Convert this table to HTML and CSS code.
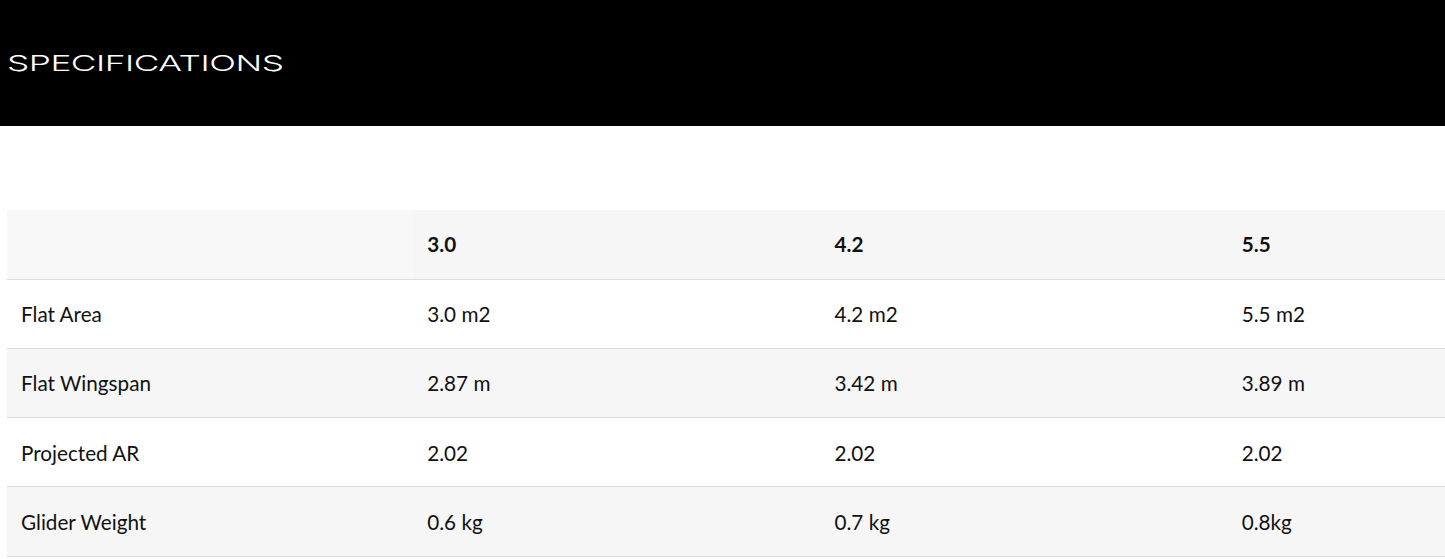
FILE: index.html
```html
<!DOCTYPE html>
<html>
<head>
<meta charset="utf-8">
<link rel="stylesheet" href="styles.css">
</head>
<body>
<header class="banner">
  <h2 class="banner-title">SPECIFICATIONS</h2>
</header>
<section class="specs">
  <table class="spec-table">
    <thead>
      <tr>
        <th class="corner"></th>
        <th>3.0</th>
        <th>4.2</th>
        <th>5.5</th>
      </tr>
    </thead>
    <tbody>
      <tr>
        <td>Flat Area</td><td>3.0 m2</td><td>4.2 m2</td><td>5.5 m2</td>
      </tr>
      <tr class="alt">
        <td>Flat Wingspan</td><td>2.87 m</td><td>3.42 m</td><td>3.89 m</td>
      </tr>
      <tr>
        <td>Projected AR</td><td>2.02</td><td>2.02</td><td>2.02</td>
      </tr>
      <tr class="alt">
        <td>Glider Weight</td><td>0.6 kg</td><td>0.7 kg</td><td>0.8kg</td>
      </tr>
    </tbody>
  </table>
</section>
</body>
</html>
```
FILE: styles.css
```css
html, body {
  margin: 0;
  padding: 0;
  background: #ffffff;
  overflow: hidden;
}
body {
  font-family: Lato, "Liberation Sans", sans-serif;
  color: #111;
}
.banner {
  background: #000;
  height: 126px;
  box-sizing: border-box;
  display: flex;
  align-items: center;
  padding: 0 0 0 7px;
}
.banner-title {
  margin: 0;
  color: #fff;
  font-family: Inter, "DejaVu Sans", sans-serif;
  font-weight: 300;
  font-size: 22px;
  letter-spacing: -0.3px;
  transform: scaleX(1.6);
  transform-origin: left center;
  line-height: 1;
}
.specs {
  padding: 84px 0 0 7px;
  overflow: hidden;
}
.spec-table {
  border-collapse: collapse;
  table-layout: fixed;
  width: 1628px;
}
.spec-table th,
.spec-table td {
  width: 407px;
  padding: 0 14px;
  text-align: left;
  font-size: 20.7px;
  border-bottom: 1px solid #dcdcdc;
  box-sizing: border-box;
}
.spec-table th {
  font-weight: 700;
  background: #f6f6f6;
  color: #111;
  height: 69px;
}
.spec-table th.corner {
  background: #f8f8f8;
  width: 406px;
}
.spec-table td {
  font-weight: 400;
  color: #111;
  height: 69.25px;
  padding-top: 1px;
}
.spec-table tr.alt td {
  background: #f6f6f6;
}
```
